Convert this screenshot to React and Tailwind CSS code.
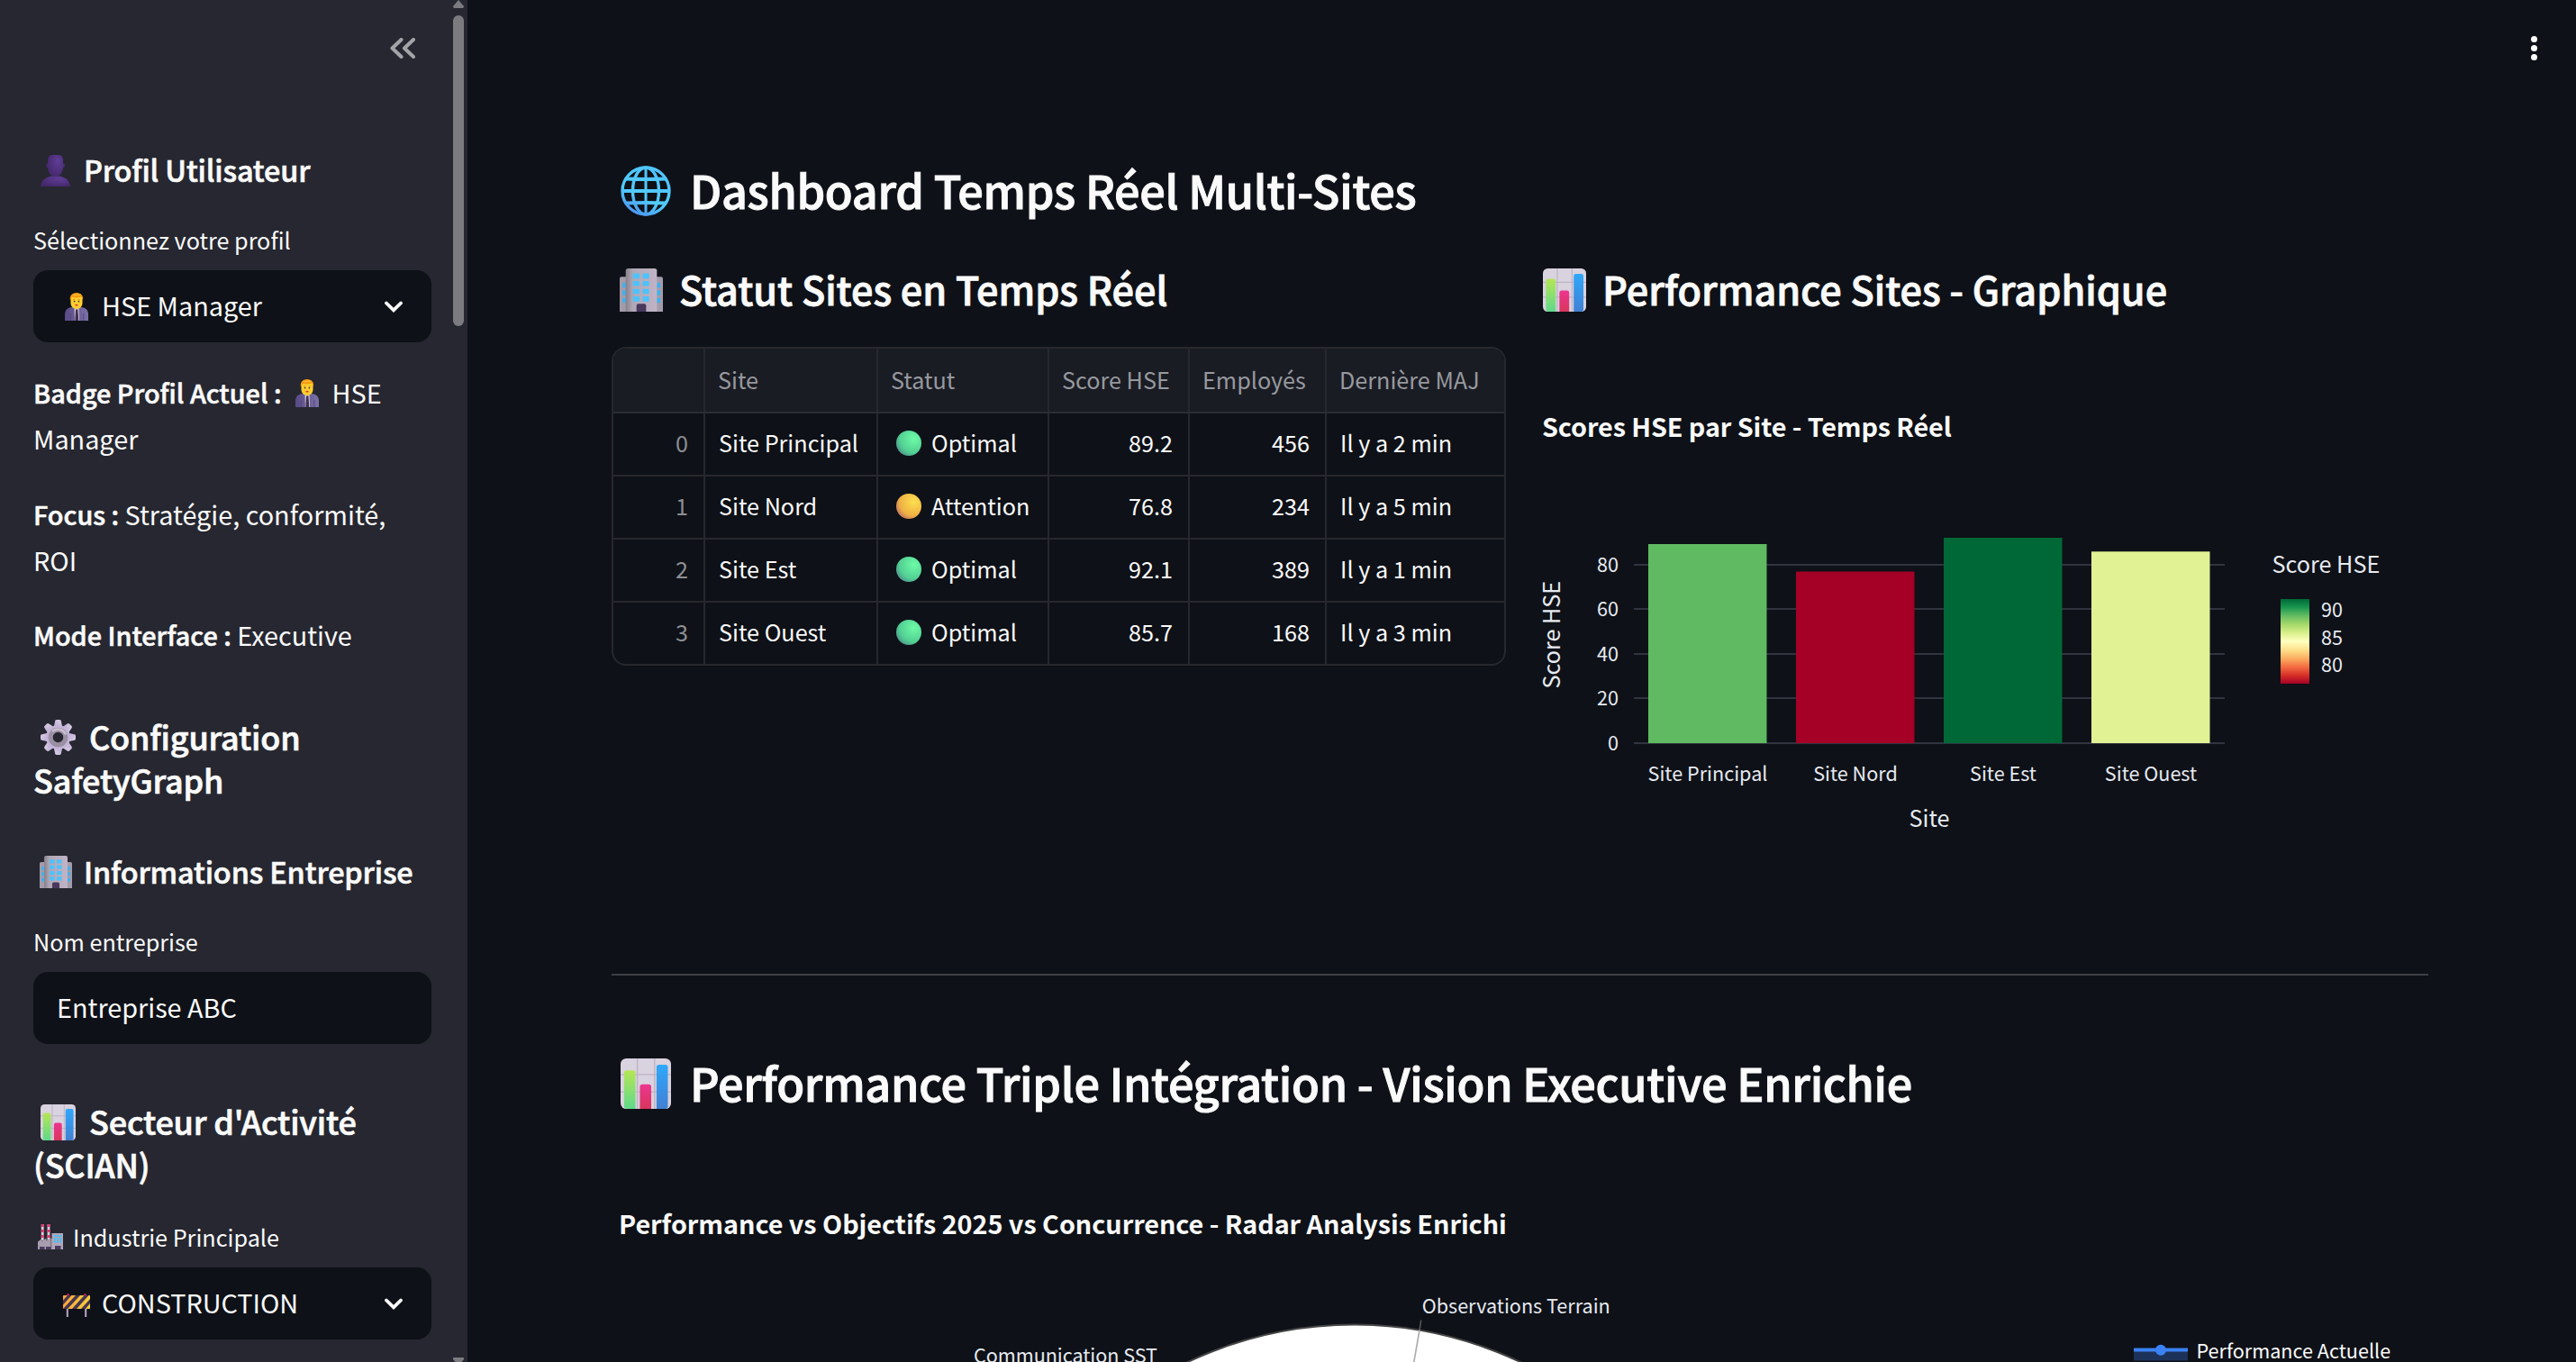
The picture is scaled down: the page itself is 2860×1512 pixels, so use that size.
import { useId } from "react";

/* ---------- Pictograms ---------- */

function PersonIcon({ className }) {
  const id = useId();
  return (
    <svg className={className} viewBox="0 0 33 35" preserveAspectRatio="none">
      <defs>
        <radialGradient id={id} cx="0.65" cy="0.3" r="0.8">
          <stop offset="0" stopColor="#5f3d96" />
          <stop offset="1" stopColor="#432668" />
        </radialGradient>
      </defs>
      <path fill={`url(#${id})`} d="M0 35C0.5 27 8 23 16.500 23S32.500 27 33 35Z" />
      <ellipse cx="7.600" cy="12" rx="1.600" ry="2.400" fill="#432668" />
      <ellipse cx="25.400" cy="12" rx="1.600" ry="2.400" fill="#4a2b74" />
      <path fill={`url(#${id})`} d="M8 6C8 2 10 0 14 0h5c4 0 6 2 6 6v7c0 7-3.500 11-8.500 11S8 20 8 13Z" />
    </svg>
  );
}

function OfficeWorkerIcon({ className }) {
  const id = useId();
  return (
    <svg className={className} viewBox="0 0 26 31" preserveAspectRatio="none">
      <defs>
        <linearGradient id={id} x1="0" x2="1" y1="0" y2="0">
          <stop offset="0" stopColor="#594a86" />
          <stop offset="1" stopColor="#7a70a6" />
        </linearGradient>
      </defs>
      <path fill={`url(#${id})`} d="M0 31V24c0-5 3-7.500 8-8h10c5 .5 8 3 8 8v7Z" />
      <path fill="#d5cde2" d="M10.500 15.500h5L16 31h-5Z" />
      <path fill="#40304f" d="M12 18.500h2.400L15.300 31h-4Z" />
      <path d="M6.200 23V31M20.800 23V31" stroke="#4b3f73" strokeWidth="0.700" />
      <rect x="10.300" y="12" width="5.400" height="6" rx="2.400" fill="#e39a1e" />
      <path fill="#ffcf2e" d="M6.500 6.500C6.500 4 9 2 13 2s6.500 2 6.500 4.500V11c0 4-2.500 6.800-6.500 6.800S6.500 15 6.500 11Z" />
      <path fill="#f59b14" d="M6 8.500C5 4 7.500 0 13 0c5 0 8 3.500 7 8.500L18.500 4.500C15 5.800 10 5.600 8 4.800Z" />
      <path fill="#ffb92a" d="M8 3.400C10 .8 16 .6 18.500 3.400 15 2.800 11 2.900 8 3.400Z" />
      <circle cx="10.600" cy="9.600" r="0.900" fill="#3a3150" />
      <circle cx="15.400" cy="9.600" r="0.900" fill="#3a3150" />
      <path d="M9 7.700h2.400M14.600 7.700H17" stroke="#c4761c" strokeWidth="0.600" />
      <ellipse cx="13" cy="13.700" rx="1.600" ry="0.900" fill="#e0313f" />
    </svg>
  );
}

const TEETH = [0, 45, 90, 135, 180, 225, 270, 315];

function GearIcon({ className }) {
  const id = useId();
  return (
    <svg className={className} viewBox="0 0 39 39" preserveAspectRatio="none">
      <defs>
        <linearGradient id={id} x1="1" x2="0" y1="0" y2="1">
          <stop offset="0" stopColor="#dcd2e2" />
          <stop offset="1" stopColor="#b8a6d6" />
        </linearGradient>
      </defs>
      <g fill={`url(#${id})`}>
        {TEETH.map((a) => (
          <path key={a} transform={`rotate(${a} 19.500 19.500)`} d="M14.500 9 16.200 1.300Q16.500 0 18 0h3q1.500 0 1.800 1.300L24.500 9Z" />
        ))}
      </g>
      <circle cx="19.500" cy="19.500" r="10.400" fill="none" stroke="#c4b5d8" strokeWidth="6" />
      <circle cx="19.500" cy="19.500" r="8.300" fill="none" stroke="#9a8fa3" strokeWidth="5" />
      <path d="M14 12.500a8.800 8.800 0 0 1 13.500 3" fill="none" stroke="#c9bfce" strokeWidth="2.500" strokeLinecap="round" />
    </svg>
  );
}

function BuildingIcon({ className }) {
  const id = useId();
  return (
    <svg className={className} viewBox="0 0 36 36" preserveAspectRatio="none">
      <defs>
        <linearGradient id={id} x1="0" x2="1" y1="0" y2="0">
          <stop offset="0" stopColor="#87808a" />
          <stop offset="0.220" stopColor="#b0a7b6" />
          <stop offset="1" stopColor="#c0b4c6" />
        </linearGradient>
      </defs>
      <path fill="#a39baa" d="M0 36V8.500Q0 7 1.500 7H34.500Q36 7 36 8.500V36Z" />
      <g fill="#3fb2ee">
        {[12, 18.3, 24.6].map((y) => (
          <g key={y}>
            <rect x="2.300" y={y} width="3" height="4" />
            <rect x="30.800" y={y} width="3" height="4" />
          </g>
        ))}
      </g>
      <path fill={`url(#${id})`} d="M5 36V2Q5 0 7 0H29Q31 0 31 2V36Z" />
      <g fill="#4cc3fb">
        {[4.2, 10.5, 17, 23.3].map((y) => (
          <g key={y}>
            <rect x="11" y={y} width="5.500" height="4.200" rx="0.500" />
            <rect x="19" y={y} width="5.500" height="4.200" rx="0.500" />
          </g>
        ))}
      </g>
      <path fill="#47385c" d="M14 36V31Q14 29.500 15.500 29.500H20.500Q22 29.500 22 31V36Z" />
    </svg>
  );
}

function BarChartIcon({ className }) {
  const id = useId();
  return (
    <svg className={className} viewBox="0 0 40 40" preserveAspectRatio="none">
      <defs>
        <linearGradient id={`${id}g`} x1="0" x2="0" y1="0" y2="1">
          <stop offset="0" stopColor="#b5e655" />
          <stop offset="1" stopColor="#5fd98a" />
        </linearGradient>
        <linearGradient id={`${id}r`} x1="0" x2="0" y1="0" y2="1">
          <stop offset="0" stopColor="#ec3590" />
          <stop offset="1" stopColor="#d9365c" />
        </linearGradient>
        <linearGradient id={`${id}b`} x1="0" x2="0" y1="0" y2="1">
          <stop offset="0" stopColor="#2fa8fb" />
          <stop offset="1" stopColor="#4180d3" />
        </linearGradient>
      </defs>
      <rect width="40" height="40" rx="4.500" fill="#d9d2df" />
      <path d="M13.300 0V40M27 0V40M0 12.800H40M0 26.500H40" stroke="#bdb3c4" strokeWidth="1" />
      <path fill={`url(#${id}g)`} d="M2.800 39V11.500Q2.800 9.500 4.800 9.500H9.800Q11.800 9.500 11.800 11.500V40H5Z" />
      <path fill={`url(#${id}r)`} d="M15.300 40V22.500Q15.300 20.500 17.300 20.500H22.300Q24.300 20.500 24.300 22.500V40Z" />
      <path fill={`url(#${id}b)`} d="M28.500 40V7Q28.500 5 30.500 5H35.500Q37.500 5 37.500 7V39L36 40Z" />
    </svg>
  );
}

function FactoryIcon({ className }) {
  return (
    <svg className={className} viewBox="0 0 28 28" preserveAspectRatio="none">
      <path d="M5.200 0V18M12 0V18" stroke="#d9cfe0" strokeWidth="2.800" />
      <path d="M5.200 0V18M12 0V18" stroke="#e8386f" strokeWidth="2.800" strokeDasharray="3 3" />
      <path fill="#a79dae" d="M0 28V19.500L4.500 16V19L9.500 15.500V18.500L14.500 15V28Z" />
      <rect x="14.500" y="16" width="2" height="12" fill="#8d8496" />
      <rect x="15.500" y="10" width="12.500" height="18" fill="#b1a6ba" />
      <g fill="#45bdf5">
        {[12, 15.2, 18.2].map((y) => (
          <g key={y}>
            <rect x="18" y={y} width="2.200" height="2.200" />
            <rect x="21" y={y} width="2.200" height="2.200" />
            <rect x="24" y={y} width="2.200" height="2.200" />
          </g>
        ))}
      </g>
      <path fill="#4a3b60" d="M2 25h5.500v3H2zM9 25h5.500v3H9zM19 24h6.500v4H19z" />
    </svg>
  );
}

function BarrierIcon({ className }) {
  const id = useId();
  return (
    <svg className={className} viewBox="0 0 30 26" preserveAspectRatio="none">
      <defs>
        <linearGradient id={id} x1="0" x2="1" y1="0" y2="0">
          <stop offset="0" stopColor="#ffa53a" />
          <stop offset="1" stopColor="#f2d13c" />
        </linearGradient>
      </defs>
      <path d="M4.800 17V26M25.200 17V26" stroke="#b9a7c6" strokeWidth="2" />
      <circle cx="5.500" cy="1.500" r="1.500" fill="#d3166b" />
      <circle cx="24.500" cy="1.500" r="1.500" fill="#d3166b" />
      <rect y="2" width="30" height="15" rx="0.800" fill={`url(#${id})`} />
      <g fill="#45354f">
        <path d="M0 7.500 5 2H9.500L0 12.500Z" />
        <path d="M0 17 14 2H19L5 17Z" />
        <path d="M10 17 23.500 2H28.500L15 17Z" />
        <path d="M20 17 30 6V11L24.800 17Z" />
      </g>
    </svg>
  );
}

function GlobeIcon({ className }) {
  const id = useId();
  return (
    <svg className={className} viewBox="0 0 56 56">
      <defs>
        <linearGradient id={id} gradientUnits="userSpaceOnUse" x1="40" x2="12" y1="0" y2="56">
          <stop offset="0" stopColor="#4fc4ff" />
          <stop offset="0.600" stopColor="#52cbfb" />
          <stop offset="1" stopColor="#4a8cf0" />
        </linearGradient>
      </defs>
      <g fill="none" stroke={`url(#${id})`} strokeWidth="3.400">
        <circle cx="28" cy="28" r="26" />
        <ellipse cx="28" cy="28" rx="14.500" ry="26" />
        <path d="M28.010 1V55" strokeWidth="3" />
        <path d="M1.500 28.010H54.500M6 14.500Q28 15.500 50 14.500M6 41.500Q28 40.500 50 41.500" strokeWidth="3.900" />
      </g>
    </svg>
  );
}

function StatusDot({ tone }) {
  const id = useId();
  const [light, mid, dark] = tone === "green" ? ["#6dfba6", "#52cf93", "#4c8f8d"] : ["#ffe04f", "#eeb044", "#c06f63"];
  return (
    <svg className="ml-[13px] h-[28px] w-[28px] shrink-0" viewBox="0 0 28 28">
      <defs>
        <radialGradient id={id} cx="0.700" cy="0.320" r="0.800">
          <stop offset="0" stopColor={light} />
          <stop offset="0.700" stopColor={mid} />
          <stop offset="1" stopColor={dark} />
        </radialGradient>
      </defs>
      <circle cx="14" cy="14" r="14" fill={`url(#${id})`} />
    </svg>
  );
}

function ChevronDown() {
  return (
    <svg className="ml-auto mr-[32px] h-[13px] w-[20px]" viewBox="0 0 20 13">
      <path d="M2 2.500 10 10.300 18 2.500" fill="none" stroke="#fafafa" strokeWidth="3.800" strokeLinejoin="miter" strokeLinecap="round" />
    </svg>
  );
}

/* ---------- Sidebar ---------- */

const SEMI = "font-medium [-webkit-text-stroke:0.02em_#fafafa]";

function Label({ children, className = "" }) {
  return <div className={`flex h-[40px] items-center text-[25.2px] leading-[40px] ${className}`}>{children}</div>;
}

function Sidebar() {
  return (
    <aside className="flex w-[519px] shrink-0 bg-[#262730]">
      <div className="box-content flex w-[442px] flex-col pl-[37px]">
        <div className="mt-[42px] flex h-[23px] justify-end pr-[18px]">
          <svg className="h-[23px] w-[28px]" viewBox="0 0 28 23">
            <path d="M12.500 2 2.500 11.500 12.500 21M26 2 16 11.500 26 21" fill="none" stroke="#a3a4a8" strokeWidth="4" strokeLinecap="round" strokeLinejoin="round" />
          </svg>
        </div>

        <h3 className={`mt-[101px] flex h-[44px] items-start text-[32.4px] leading-[44px] tracking-[-0.004em] ${SEMI}`}>
          <PersonIcon className="ml-[8px] mr-[15px] mt-[6px] h-[35px] w-[33px]" />
          <span>Profil Utilisateur</span>
        </h3>
        <Label className="mt-[36px]">Sélectionnez votre profil</Label>
        <div className="mt-[14px] flex h-[80px] items-center rounded-[16px] bg-[#0e1117] text-[28.8px]">
          <OfficeWorkerIcon className="ml-[35px] mr-[15px] h-[31px] w-[26px]" />
          <span className="-mt-[3px]">HSE Manager</span>
          <ChevronDown />
        </div>

        <p className="mt-[30px] text-[28.8px] leading-[51px]">
          <span className="flex h-[51px]">
            <strong className={SEMI}>Badge Profil Actuel :</strong>
            <OfficeWorkerIcon className="ml-[15px] mr-[15px] mt-[11px] h-[31px] w-[26px]" />
            <span>HSE</span>
          </span>
          Manager
        </p>
        <p className="mt-[33px] text-[28.8px] leading-[51px]">
          <strong className={SEMI}>Focus :</strong> Stratégie, conformité,
          <br />
          ROI
        </p>
        <p className="mt-[32px] text-[28.8px] leading-[51px]">
          <strong className={SEMI}>Mode Interface :</strong> Executive
        </p>

        <h2 className={`mt-[63px] text-[36px] leading-[48px] tracking-[-0.005em] ${SEMI}`}>
          <span className="flex h-[48px]">
            <GearIcon className="ml-[8px] mr-[15px] mt-[6px] h-[39px] w-[39px]" />
            <span>Configuration</span>
          </span>
          SafetyGraph
        </h2>

        <h3 className={`mt-[56px] flex h-[44px] items-start text-[32.4px] leading-[44px] tracking-[-0.004em] ${SEMI}`}>
          <BuildingIcon className="ml-[7px] mr-[13px] mt-[5px] h-[36px] w-[36px]" />
          <span>Informations Entreprise</span>
        </h3>
        <Label className="mt-[36px]">Nom entreprise</Label>
        <div className="mt-[14px] flex h-[80px] items-center rounded-[16px] bg-[#0e1117] pl-[26px] text-[28.8px]">
          <span className="-mt-[3px]">Entreprise ABC</span>
        </div>

        <h2 className={`mt-[61px] text-[36px] leading-[48px] tracking-[-0.005em] ${SEMI}`}>
          <span className="flex h-[48px]">
            <BarChartIcon className="ml-[8px] mr-[15px] mt-[6px] h-[40px] w-[39px]" />
            <span>Secteur d'Activité</span>
          </span>
          (SCIAN)
        </h2>
        <Label className="mt-[37px]">
          <FactoryIcon className="ml-[5px] mr-[11px] h-[28px] w-[28px]" />
          <span>Industrie Principale</span>
        </Label>
        <div className="mt-[14px] flex h-[80px] items-center rounded-[16px] bg-[#0e1117] text-[28.8px]">
          <BarrierIcon className="ml-[33px] mr-[13px] mt-[4px] h-[26px] w-[30px]" />
          <span className="-mt-[3px]">CONSTRUCTION</span>
          <ChevronDown />
        </div>
      </div>

      <div className="ml-auto mr-[4px] flex w-[12px] flex-col">
        <svg className="h-[9px] w-[12px]" viewBox="0 0 12 9">
          <path d="M6 0 12 7Q12 9 10.500 9H1.500Q0 9 0 7Z" fill="#7c7b80" />
        </svg>
        <div className="mt-[8px] h-[345px] rounded-full bg-[#7c7b80]" />
        <svg className="mt-auto h-[5px] w-[12px]" viewBox="0 0 12 5">
          <path d="M0 1Q0 0 1 0H11Q12 0 12 1V2L9.500 5H2.500L0 2Z" fill="#7c7b80" />
        </svg>
      </div>
    </aside>
  );
}

/* ---------- Table ---------- */

const COLS = "grid grid-cols-[102px_192px_190px_156px_152px_197px]";
const ROWS = [
  ["0", "Site Principal", "green", "Optimal", "89.2", "456", "Il y a 2 min"],
  ["1", "Site Nord", "amber", "Attention", "76.8", "234", "Il y a 5 min"],
  ["2", "Site Est", "green", "Optimal", "92.1", "389", "Il y a 1 min"],
  ["3", "Site Ouest", "green", "Optimal", "85.7", "168", "Il y a 3 min"],
];

function Cell({ children, className = "", last = false }) {
  return <div className={`flex items-center whitespace-nowrap border-[#26282e] ${last ? "" : "border-r-2"} ${className}`}>{children}</div>;
}

function SitesTable() {
  return (
    <div className="mt-[36px] h-[354px] w-[993px] overflow-hidden rounded-[16px] border-2 border-[#26282e] text-[25.2px]">
      <div className={`${COLS} h-[72px] border-b-2 border-[#2b2d35] bg-[#1a1c24] text-[#97999e]`}>
        <Cell />
        <Cell className="pl-[14px]">Site</Cell>
        <Cell className="pl-[14px]">Statut</Cell>
        <Cell className="pl-[14px]">Score HSE</Cell>
        <Cell className="pl-[14px]">Employés</Cell>
        <Cell className="pl-[14px]" last>Dernière MAJ</Cell>
      </div>
      {ROWS.map(([i, site, tone, status, score, staff, updated]) => (
        <div key={i} className={`${COLS} h-[70px] border-b-2 border-[#26282e]`}>
          <Cell className="justify-end pb-[2px] pr-[17px] text-[#8c8e93]">{i}</Cell>
          <Cell className="pb-[2px] pl-[15px]">{site}</Cell>
          <Cell className="pb-[2px] pl-[7px]">
            <StatusDot tone={tone} />
            <span className="ml-[11px]">{status}</span>
          </Cell>
          <Cell className="justify-end pb-[2px] pr-[17px]">{score}</Cell>
          <Cell className="justify-end pb-[2px] pr-[17px]">{staff}</Cell>
          <Cell className="pb-[2px] pl-[15px]" last>{updated}</Cell>
        </div>
      ))}
    </div>
  );
}

/* ---------- Charts ---------- */

const BARS = [
  [1830, 604, "#5fba62", "Site Principal"],
  [1994, 634.5, "#a50026", "Site Nord"],
  [2158, 597, "#006837", "Site Est"],
  [2322, 612.3, "#e1f295", "Site Ouest"],
];
const TICKS = [[80, 627], [60, 676], [40, 726], [20, 775], [0, 825]];
const SCALE = ["#006837", "#1a9850", "#66bd63", "#a6d96a", "#d9ef8b", "#ffffbf", "#fee08b", "#fdae61", "#f46d43", "#d73027", "#a50026"];

function ScoresChart() {
  const id = useId();
  return (
    <svg className="mt-[36px] h-[564px] w-[993px]" viewBox="1703 385 993 564" fill="#e6eaf1">
      <defs>
        <linearGradient id={id} x1="0" x2="0" y1="0" y2="1">
          {SCALE.map((c, i) => (
            <stop key={c} offset={i / 10} stopColor={c} />
          ))}
        </linearGradient>
      </defs>
      <text x="1712" y="485" fontSize="28.800" fontWeight="700" fill="#fafafa" letterSpacing="-0.110">Scores HSE par Site - Temps Réel</text>
      {TICKS.map(([v, y]) => (
        <g key={v}>
          <rect x="1814" y={y - 1} width="656" height="2" fill="#31333f" />
          <text x="1797" y={y + 8.300} textAnchor="end" fontSize="21.600">{v}</text>
        </g>
      ))}
      {BARS.map(([x, y, c, label]) => (
        <g key={label}>
          <rect x={x} y={y} width="131.500" height={825 - y} fill={c} />
          <text x={x + 66} y="867" textAnchor="middle" fontSize="21.600">{label}</text>
        </g>
      ))}
      <text x="2142" y="918" textAnchor="middle" fontSize="25.200">Site</text>
      <text transform="translate(1732 704.700) rotate(-90)" textAnchor="middle" fontSize="25.200">Score HSE</text>
      <text x="2522.500" y="636" fontSize="25.200">Score HSE</text>
      <rect x="2532" y="665" width="32" height="94" fill={`url(#${id})`} />
      <g fontSize="21.600">
        <text x="2577" y="685">90</text>
        <text x="2577" y="716">85</text>
        <text x="2577" y="746">80</text>
      </g>
    </svg>
  );
}

function RadarChart() {
  return (
    <svg className="mt-[85px] h-[192px] w-[2017px]" viewBox="679 1320 2017 192" fill="#e6eaf1">
      <text x="687" y="1370" fontSize="28.800" fontWeight="700" fill="#fafafa" letterSpacing="-0.060">
        Performance vs Objectifs 2025 vs Concurrence - Radar Analysis Enrichi
      </text>
      <circle cx="1503.300" cy="1901" r="430.500" fill="#ffffff" stroke="#444444" strokeWidth="2" />
      <path d="M1577.800 1465.500 1576 1476.500" stroke="#555557" strokeWidth="1.600" />
      <path d="M1576 1476.500 1569.500 1514" stroke="#aaaaaa" strokeWidth="1.600" />
      <text x="1578.700" y="1458" fontSize="21.600">Observations Terrain</text>
      <text x="1081" y="1512.500" fontSize="21.600" letterSpacing="-0.050">Communication SST</text>
      <rect x="2369" y="1498" width="60" height="12.500" fill="#1c3259" />
      <rect x="2369" y="1496.500" width="60" height="4" fill="#3b82f6" />
      <circle cx="2399" cy="1498.700" r="6" fill="#3b82f6" />
      <text x="2438.500" y="1508" fontSize="21.600" fill="#fafafa">Performance Actuelle</text>
    </svg>
  );
}

/* ---------- Page ---------- */

export default function App() {
  return (
    <div className="relative flex h-screen w-screen overflow-hidden bg-[#0e1117] font-['Noto_Sans_CJK_SC',sans-serif] text-[#fafafa]">
      <Sidebar />
      <main className="ml-[160px] flex w-[2017px] shrink-0 flex-col">
        <h1 className={`mt-[176px] flex h-[68px] items-start text-[50.4px] leading-[70px] tracking-[-0.006em] ${SEMI}`}>
          <GlobeIcon className="ml-[10px] mr-[21px] mt-[8px] h-[56px] w-[56px]" />
          <span>Dashboard Temps Réel Multi-Sites</span>
        </h1>
        <div className="mt-[47px] grid h-[658px] grid-cols-[993px_993px] gap-x-[31px]">
          <section>
            <h2 className={`flex h-[58px] items-start text-[43.2px] leading-[58px] ${SEMI}`}>
              <BuildingIcon className="ml-[9px] mr-[18px] mt-[7px] h-[48px] w-[48px]" />
              <span>Statut Sites en Temps Réel</span>
            </h2>
            <SitesTable />
          </section>
          <section>
            <h2 className={`flex h-[58px] items-start text-[43.2px] leading-[58px] ${SEMI}`}>
              <BarChartIcon className="ml-[10px] mr-[18px] mt-[7px] h-[48px] w-[48px]" />
              <span>Performance Sites - Graphique</span>
            </h2>
            <ScoresChart />
          </section>
        </div>
        <hr className="mt-[132px] h-[2px] border-0 bg-[#3d3f45]" />
        <h1 className={`mt-[84px] flex h-[68px] items-start text-[50.4px] leading-[70px] tracking-[-0.006em] ${SEMI}`}>
          <BarChartIcon className="ml-[10px] mr-[21px] mt-[8px] h-[56px] w-[56px]" />
          <span>Performance Triple Intégration - Vision Executive Enrichie</span>
        </h1>
        <RadarChart />
      </main>
      <button aria-label="Menu" className="absolute right-[43px] top-[40px] flex w-[8px] flex-col items-center gap-[3px]">
        <span className="h-[7px] w-[7px] rounded-full bg-white" />
        <span className="h-[7px] w-[7px] rounded-full bg-white" />
        <span className="h-[7px] w-[7px] rounded-full bg-white" />
      </button>
    </div>
  );
}
